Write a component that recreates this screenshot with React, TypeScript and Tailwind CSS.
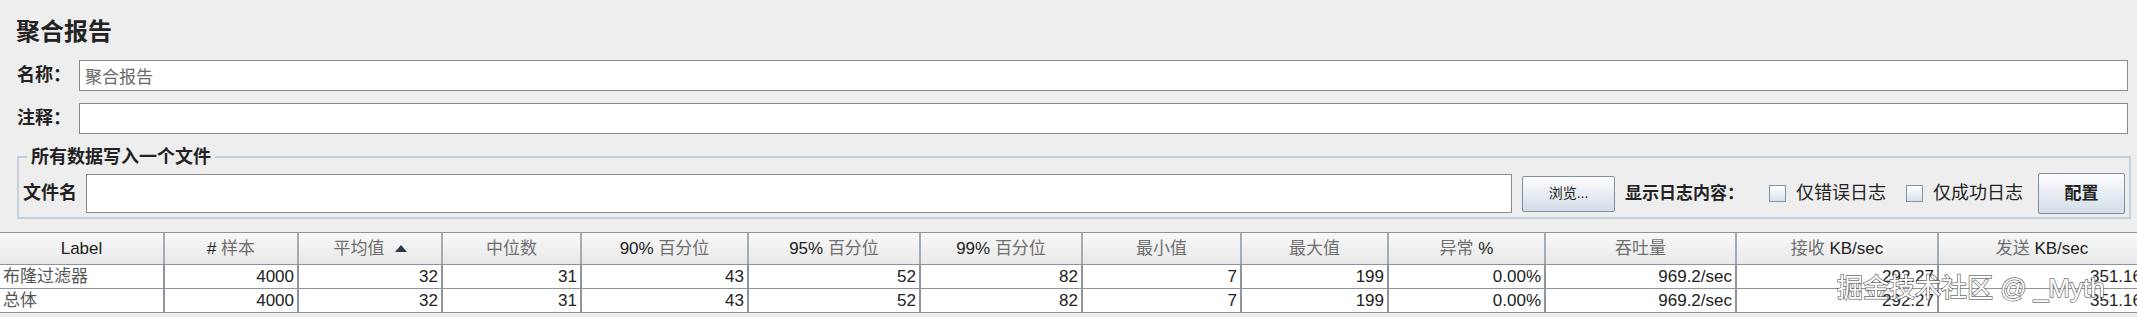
const font = "font-['Liberation_Sans','Noto_Sans_CJK_SC',sans-serif]";

function Cjk({ children }: { children: React.ReactNode }) {
  return <span className="text-[#6f6f6f]">{children}</span>;
}

const headers: React.ReactNode[] = [
  <span className="text-[#222]">Label</span>,
  <span className="text-[#222]"># <Cjk>样本</Cjk></span>,
  <span className="flex items-center justify-center gap-[10px]">
    <Cjk>平均值</Cjk>
    <svg width="12" height="7" viewBox="0 0 12 7"><path d="M6 0L12 7H0Z" fill="#2b3a4f" /></svg>
  </span>,
  <Cjk>中位数</Cjk>,
  <span className="text-[#222]">90% <Cjk>百分位</Cjk></span>,
  <span className="text-[#222]">95% <Cjk>百分位</Cjk></span>,
  <span className="text-[#222]">99% <Cjk>百分位</Cjk></span>,
  <Cjk>最小值</Cjk>,
  <Cjk>最大值</Cjk>,
  <span className="text-[#222]"><Cjk>异常</Cjk> %</span>,
  <Cjk>吞吐量</Cjk>,
  <span className="text-[#222]"><Cjk>接收</Cjk> KB/sec</span>,
  <span className="text-[#222]"><Cjk>发送</Cjk> KB/sec</span>,
];

const rows = [
  ["布隆过滤器", "4000", "32", "31", "43", "52", "82", "7", "199", "0.00%", "969.2/sec", "292.27", "351.16"],
  ["总体", "4000", "32", "31", "43", "52", "82", "7", "199", "0.00%", "969.2/sec", "292.27", "351.16"],
];

const grid =
  "grid grid-cols-[165px_134px_144px_139px_167px_172px_162px_159px_147px_157px_191px_202px_208px]";

function Checkbox() {
  return (
    <span className="w-[17px] h-[17px] border border-[#8193a6] bg-gradient-to-b from-white to-[#d8e2ec] shrink-0" />
  );
}

export default function App() {
  return (
    <div className={`relative w-[2137px] h-[317px] overflow-hidden bg-[#eeeeee] text-[#222] ${font}`}>
      {/* 标题 */}
      <div className="h-[60px] pt-[17px] pl-[16px] text-[24px] leading-[30px] font-bold">聚合报告</div>

      {/* 名称 / 注释 */}
      <div className="flex flex-col gap-[12px] pl-[17px] pr-[9px]">
        <div className="flex items-center h-[31px]">
          <span className="w-[62px] text-[18px] font-bold">名称：</span>
          <input
            readOnly
            defaultValue="聚合报告"
            className="flex-1 h-[31px] bg-white border border-[#8a8a8a] px-[5px] text-[17px] text-[#6a6a6a] outline-none"
          />
        </div>
        <div className="flex items-center h-[31px]">
          <span className="w-[62px] text-[18px] font-bold">注释：</span>
          <input readOnly className="flex-1 h-[31px] bg-white border border-[#8a8a8a] px-[5px] text-[17px] outline-none" />
        </div>
      </div>

      {/* 所有数据写入一个文件 */}
      <fieldset className="mt-[12px] ml-[17px] mr-[6px] h-[73px] border-2 border-[#c3d1dd] px-[4px] pb-[3px]">
        <legend className="ml-[4px] px-[4px] text-[18px] leading-[22px] font-bold">所有数据写入一个文件</legend>
        <div className="flex items-center mt-[5px]">
          <span className="w-[63px] text-[18px] font-bold">文件名</span>
          <input readOnly className="flex-1 h-[39px] bg-white border border-[#8a8a8a] outline-none" />
          <button className="ml-[10px] w-[93px] h-[36px] border border-[#7f8fa0] rounded-[2px] bg-gradient-to-b from-[#fdfdfe] to-[#d3dde8] text-[14px]">
            浏览...
          </button>
          <span className="ml-[10px] text-[17px] font-bold">显示日志内容：</span>
          <span className="ml-[25px] flex items-center gap-[10px]">
            <Checkbox />
            <span className="text-[18px]">仅错误日志</span>
          </span>
          <span className="ml-[20px] flex items-center gap-[10px]">
            <Checkbox />
            <span className="text-[18px]">仅成功日志</span>
          </span>
          <button className="ml-[15px] w-[87px] h-[41px] border border-[#7f8fa0] rounded-[2px] bg-gradient-to-b from-[#fdfdfe] to-[#d3dde8] text-[17px] font-bold">
            配置
          </button>
        </div>
      </fieldset>

      {/* 表格 */}
      <div className="mt-[13px] w-[2147px] border-t border-[#8c959e]">
        <div className={`${grid} h-[32px] border-b border-[#8c959e]`}>
          {headers.map((h, i) => (
            <div
              key={i}
              className="flex items-center justify-center bg-gradient-to-b from-[#f8f8f8] to-[#e9e9e9] border-r-2 border-[#a3abb3] text-[17px]"
            >
              {h}
            </div>
          ))}
        </div>
        {rows.map((r, ri) => (
          <div key={ri} className={`${grid} h-[24px] border-b border-[#8c959e]`}>
            {r.map((c, ci) => (
              <div
                key={ci}
                className={`bg-white border-r-2 border-[#8c959e] text-[17px] leading-[23px] whitespace-nowrap ${
                  ci === 0 ? "pl-[3px] text-left text-[#555]" : "pr-[3px] text-right"
                }`}
              >
                {c}
              </div>
            ))}
          </div>
        ))}
      </div>

      {/* 水印 */}
      <div className="absolute left-[1837px] top-[272px] text-[26px] leading-[32px] text-white whitespace-nowrap [-webkit-text-stroke:1.5px_rgba(70,70,70,0.8)] [paint-order:stroke_fill] pointer-events-none">
        掘金技术社区 @ _Myth
      </div>
    </div>
  );
}
